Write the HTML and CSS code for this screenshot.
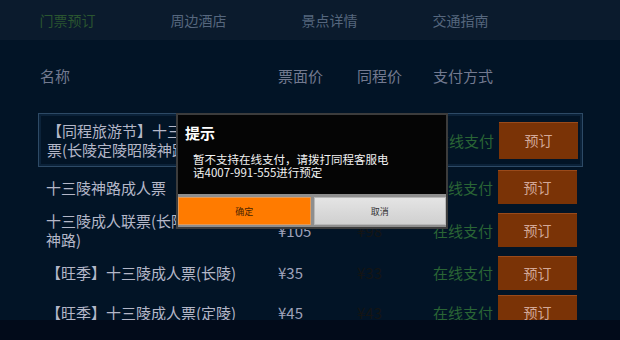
FILE: index.html
```html
<!DOCTYPE html>
<html lang="zh">
<head>
<meta charset="utf-8">
<link rel="stylesheet" href="styles.css">
</head>
<body>
<div class="page">
  <nav class="tabs">
    <div class="tab active">门票预订</div>
    <div class="tab">周边酒店</div>
    <div class="tab">景点详情</div>
    <div class="tab">交通指南</div>
  </nav>
  <main class="main">
    <div class="head">
      <div>名称</div>
      <div>票面价</div>
      <div>同程价</div>
      <div>支付方式</div>
      <div></div>
    </div>
    <div class="row selected r1">
      <div class="name">【同程旅游节】十三陵成人联票(长陵定陵昭陵神路)</div>
      <div class="price">¥105</div>
      <div class="price2">¥90</div>
      <div class="pay">在线支付</div>
      <div class="btn">预订</div>
    </div>
    <div class="row r2">
      <div class="name">十三陵神路成人票</div>
      <div class="price">¥35</div>
      <div class="price2">¥33</div>
      <div class="pay">在线支付</div>
      <div class="btn">预订</div>
    </div>
    <div class="row r3">
      <div class="name">十三陵成人联票(长陵定陵昭陵神路)</div>
      <div class="price">¥105</div>
      <div class="price2">¥98</div>
      <div class="pay">在线支付</div>
      <div class="btn">预订</div>
    </div>
    <div class="row r4">
      <div class="name">【旺季】十三陵成人票(长陵)</div>
      <div class="price">¥35</div>
      <div class="price2">¥33</div>
      <div class="pay">在线支付</div>
      <div class="btn">预订</div>
    </div>
    <div class="row r5">
      <div class="name">【旺季】十三陵成人票(定陵)</div>
      <div class="price">¥45</div>
      <div class="price2">¥43</div>
      <div class="pay">在线支付</div>
      <div class="btn">预订</div>
    </div>
  </main>
  <footer class="foot"></footer>

  <div class="dialog">
    <div class="dlg-title">提示</div>
    <div class="dlg-msg">暂不支持在线支付，请拨打同程客服电话4007-991-555进行预定</div>
    <div class="dlg-btns">
      <div class="dbtn ok">确定</div>
      <div class="dbtn cancel">取消</div>
    </div>
  </div>
</div>
</body>
</html>
```
FILE: styles.css
```css
* { box-sizing: border-box; }
html, body {
  margin: 0;
  padding: 0;
  width: 620px;
  height: 340px;
  overflow: hidden;
  background: #021426;
  font-family: "Noto Sans CJK SC", "Noto Sans", sans-serif;
}
.page {
  position: relative;
  width: 620px;
  height: 340px;
  display: flex;
  flex-direction: column;
}
.tabs {
  height: 40px;
  background: #0b1b2d;
  display: grid;
  grid-template-columns: repeat(4, 131px);
  padding-left: 2px;
  align-items: center;
  flex: none;
}
.tab {
  text-align: center;
  font-size: 14px;
  color: #56677e;
}
.tab.active { color: #2a5530; }
.main {
  height: 280px;
  overflow: hidden;
  flex: none;
  padding-left: 38px;
}
.head, .row {
  width: 545px;
  display: grid;
  grid-template-columns: 232px 79px 76px 65px 79px;
  padding-left: 8px;
  align-items: center;
  font-size: 15px;
  line-height: 19px;
}
.head {
  height: 30px;
  margin-top: 20px;
  margin-bottom: 23px;
  color: #737a90;
}
.head > div:first-child { margin-left: -6px; }
.row { color: #b4b7c8; }
.row.selected {
  border: 1px solid #2d4a66;
  box-shadow: inset 0 0 0 2px #0b2239;
}
.r1 { height: 54px; }
.r2 { height: 40px; }
.r3 { height: 46px; }
.r4 { height: 39px; }
.r5 { height: 40px; }
.name { max-width: 203px; }
.price { color: #9ea2ba; }
.price2 { color: #141414; }
.pay { color: #2a6535; }
.btn {
  height: 34px;
  background: #7a3306;
  border-top: 1px solid #9a4a1a;
  color: #d3a898;
  font-size: 14px;
  display: flex;
  align-items: center;
  justify-content: center;
}
.r1 .btn { height: 37px; }
.foot {
  height: 20px;
  background: #020b1a;
  flex: none;
}
.dialog {
  position: absolute;
  left: 176px;
  top: 113px;
  width: 272px;
  height: 116px;
  background: #050505;
  border: 2px solid #3c3c3c;
  display: flex;
  flex-direction: column;
}
.dlg-title {
  color: #fff;
  font-size: 15px;
  font-weight: bold;
  line-height: 20px;
  padding: 8px 0 0 7px;
}
.dlg-msg {
  color: #f2f2f2;
  font-size: 11.5px;
  line-height: 13px;
  width: 215px;
  padding-left: 15px;
  margin-top: 10px;
}
.dlg-btns {
  margin-top: auto;
  background: #8e8e8e;
  padding: 3px 0 2px;
  display: flex;
  gap: 3px;
}
.dbtn {
  height: 28px;
  flex: 1;
  display: flex;
  align-items: center;
  justify-content: center;
  font-size: 9px;
}
.dbtn.ok {
  background: #ff7b00;
  border: 1px solid #e39a58;
  color: #4a2400;
}
.dbtn.cancel {
  background: linear-gradient(#e4e4e4, #d0d0d0);
  border: 1px solid #b8b8b8;
  color: #333;
}
```
